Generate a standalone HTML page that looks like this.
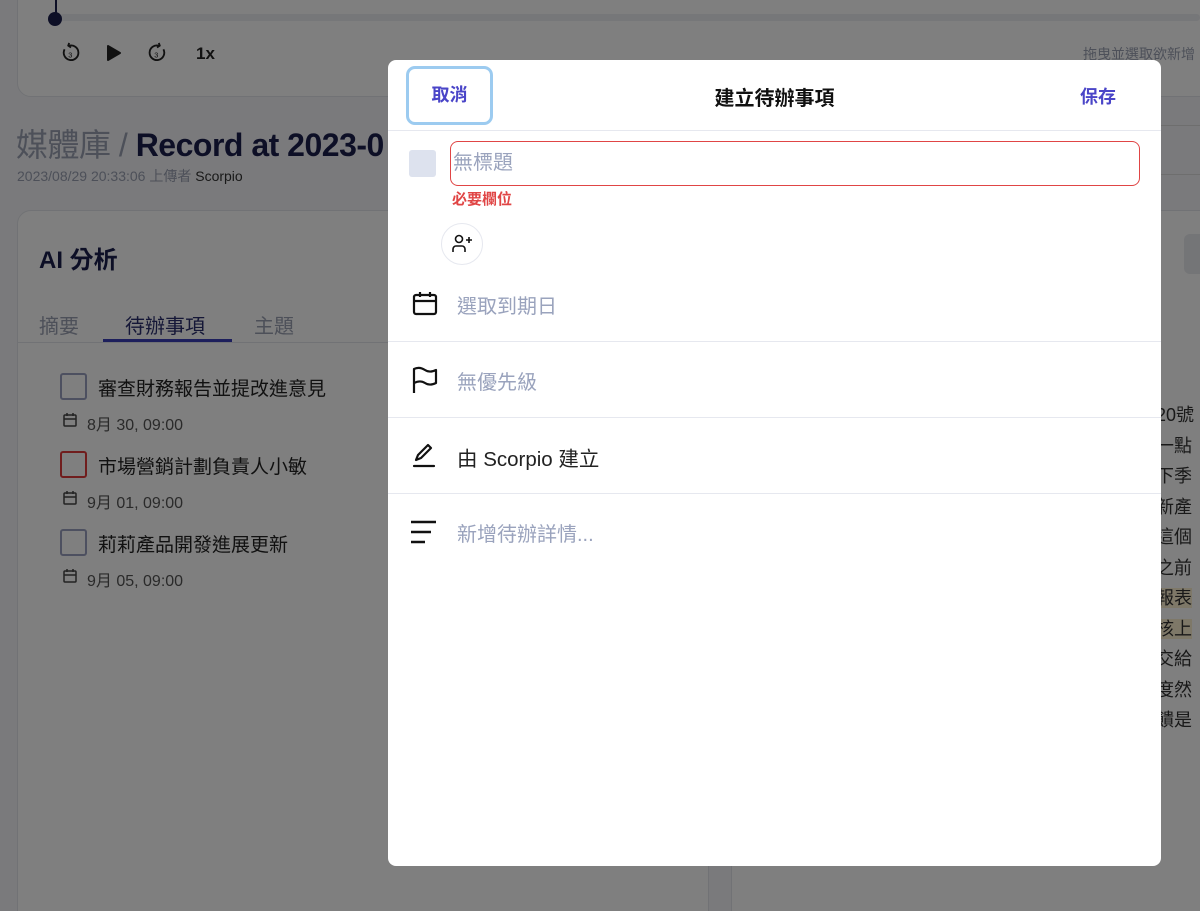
<!DOCTYPE html>
<html style="width:1200px;height:911px;overflow:hidden"><head><meta charset="utf-8"><style>
*{box-sizing:border-box;margin:0;padding:0}
body{width:1200px;height:911px;overflow:hidden;position:relative;background:#f4f5f8;font-family:"Liberation Sans","Noto Sans CJK TC",sans-serif;}
.abs{position:absolute}
.card{position:absolute;background:#fff;border:1px solid #e3e5ea;border-radius:14px}
.ov{position:absolute;left:0;top:0;width:1200px;height:911px;background:rgba(0,0,0,0.5)}
.m{position:absolute;left:388px;top:60px;width:773px;height:806px;background:#fff;border-radius:8px;overflow:hidden}
.row{position:absolute;left:0;right:0;border-top:1px solid #e6e8ef}
.gt{color:#9aa3bd;font-size:20px}
svg{position:absolute}
</style></head><body>
<div class="card" style="left:17px;top:-20px;width:1200px;height:117px"></div>
<div class="abs" style="left:55px;top:0;width:2px;height:18px;background:#1b1f4d"></div>
<div class="abs" style="left:60px;top:14px;width:1140px;height:7px;background:#eceef2;border-radius:4px"></div>
<div class="abs" style="left:48px;top:12px;width:14px;height:14px;border-radius:50%;background:#1b1f4d"></div>
<svg style="left:60px;top:42px" width="22" height="22" viewBox="0 0 24 24" fill="none" stroke="#222" stroke-width="2"><path d="M5 8a8 8 0 1 0 5-4"/><path d="M10 1l-1 3 3 2"/><text x="9" y="17" font-size="8" fill="#222" stroke="none">3</text></svg>
<svg style="left:106px;top:44px" width="16" height="18" viewBox="0 0 16 18"><path d="M2 2l12 7-12 7z" fill="#222" stroke="#222" stroke-linejoin="round" stroke-width="2"/></svg>
<svg style="left:146px;top:42px" width="22" height="22" viewBox="0 0 24 24" fill="none" stroke="#222" stroke-width="2"><path d="M19 8a8 8 0 1 1-5-4"/><path d="M14 1l1 3-3 2"/><text x="9" y="17" font-size="8" fill="#222" stroke="none">3</text></svg>
<div class="abs" style="left:196px;top:44px;font-size:17px;color:#222;font-weight:bold">1x</div>
<div class="abs" style="left:1083px;top:44px;font-size:14px;color:#9aa0b2;white-space:nowrap">拖曳並選取欲新增</div>
<div class="abs" style="left:16px;top:120px;font-size:32px;color:#1b1f4d;white-space:nowrap;font-weight:bold;letter-spacing:-0.5px"><span style="color:#9aa0b2;font-weight:normal">媒體庫 / </span>Record at 2023-0</div>
<div class="abs" style="left:17px;top:166px;font-size:14px;color:#9aa0b2;white-space:nowrap">2023/08/29 20:33:06 上傳者 <span style="color:#333">Scorpio</span></div>
<div class="card" style="left:17px;top:210px;width:692px;height:720px"></div>
<div class="card" style="left:731px;top:210px;width:500px;height:720px"></div>
<div class="abs" style="left:39px;top:240px;font-size:24px;font-weight:bold;color:#1b1f4d">AI 分析</div>
<div class="abs" style="left:39px;top:310px;font-size:20px;color:#9aa0b2">摘要</div>
<div class="abs" style="left:125px;top:310px;font-size:20px;color:#2a2f6e">待辦事項</div>
<div class="abs" style="left:254px;top:310px;font-size:20px;color:#9aa0b2">主題</div>
<div class="abs" style="left:103px;top:339px;width:129px;height:3px;background:#3a3fb8"></div>
<div class="abs" style="left:17px;top:342px;width:692px;height:1px;background:#e3e5ea"></div>
<div class="abs" style="left:60px;top:373px;width:27px;height:27px;border:2px solid #9aa0c0;border-radius:3px"></div>
<div class="abs" style="left:98px;top:374px;font-size:19px;color:#222">審查財務報告並提改進意見</div>
<div class="abs" style="left:87px;top:411px;font-size:16px;color:#555">8月 30, 09:00</div>
<div class="abs" style="left:60px;top:451px;width:27px;height:27px;border:2px solid #e03b3b;border-radius:3px"></div>
<div class="abs" style="left:98px;top:452px;font-size:19px;color:#222">市場營銷計劃負責人小敏</div>
<div class="abs" style="left:87px;top:489px;font-size:16px;color:#555">9月 01, 09:00</div>
<div class="abs" style="left:60px;top:529px;width:27px;height:27px;border:2px solid #9aa0c0;border-radius:3px"></div>
<div class="abs" style="left:98px;top:530px;font-size:19px;color:#222">莉莉產品開發進展更新</div>
<div class="abs" style="left:87px;top:567px;font-size:16px;color:#555">9月 05, 09:00</div>
<svg style="left:62px;top:412px" width="16" height="16" viewBox="0 0 16 16" fill="none" stroke="#444" stroke-width="1.5"><rect x="2" y="3" width="12" height="11" rx="1"/><path d="M2 7h12M5 1v3M11 1v3"/></svg>
<svg style="left:62px;top:490px" width="16" height="16" viewBox="0 0 16 16" fill="none" stroke="#444" stroke-width="1.5"><rect x="2" y="3" width="12" height="11" rx="1"/><path d="M2 7h12M5 1v3M11 1v3"/></svg>
<svg style="left:62px;top:568px" width="16" height="16" viewBox="0 0 16 16" fill="none" stroke="#444" stroke-width="1.5"><rect x="2" y="3" width="12" height="11" rx="1"/><path d="M2 7h12M5 1v3M11 1v3"/></svg>
<div class="abs" style="left:1160px;top:125px;width:40px;height:50px;border-top:1px solid #ddd;border-bottom:1px solid #ddd"></div>
<div class="abs" style="left:1184px;top:234px;width:30px;height:40px;background:#e8eaee;border-radius:6px"></div>
<div class="abs" style="left:1156px;top:400px;font-size:18px;color:#333;line-height:30.5px;white-space:nowrap">20號<br>一點<br>下季<br>新產<br>這個<br>之前<br><span style="background:#fdf1d0">報表</span><br><span style="background:#fdf1d0">核上</span><br>交給<br>度然<br>饋是</div>
<div class="ov"></div>
<div class="m">
 <div class="abs" style="left:18px;top:6px;width:87px;height:59px;border:3px solid #9ccbf0;border-radius:9px;text-align:center;line-height:53px;color:#4a45c8;font-size:18px;font-weight:bold">取消</div>
 <div class="abs" style="left:0;right:0;top:22px;text-align:center;font-size:20px;font-weight:bold;color:#111">建立待辦事項</div>
 <div class="abs" style="left:692px;top:23px;font-size:18px;font-weight:bold;color:#4a45c8">保存</div>
 <div class="row" style="top:70px"></div>
 <div class="abs" style="left:21px;top:90px;width:27px;height:27px;background:#dde2ee;border-radius:3px"></div>
 <div class="abs" style="left:62px;top:81px;width:690px;height:45px;border:1.5px solid #e04545;border-radius:8px;padding-left:2px;line-height:42px;font-size:20px;color:#9aa3bd">無標題</div>
 <div class="abs" style="left:64px;top:128px;font-size:15px;color:#e04545;font-weight:bold">必要欄位</div>
 <div class="abs" style="left:53px;top:163px;width:42px;height:42px;border:1.5px solid #e6e8ef;border-radius:50%"></div>
 <svg style="left:64px;top:174px" width="22" height="20" viewBox="0 0 22 20" fill="none" stroke="#111" stroke-width="1.6"><circle cx="7" cy="5" r="3.5"/><path d="M1 18v-3a3 3 0 0 1 3-3h6a3 3 0 0 1 3 3v3M17 3v6M14 6h6"/></svg>
 <svg style="left:24px;top:230px" width="26" height="26" viewBox="0 0 26 26" fill="none" stroke="#111" stroke-width="2.2"><rect x="2" y="5" width="22" height="19" rx="2"/><path d="M2 11h22M8 2v5M18 2v5"/></svg>
 <div class="abs gt" style="left:69px;top:230px">選取到期日</div>
 <div class="row" style="top:281px"></div>
 <svg style="left:24px;top:306px" width="26" height="28" viewBox="0 0 26 28" fill="none" stroke="#111" stroke-width="2.2" stroke-linejoin="round"><path d="M2 27V3c4-2 8-1 11 1s7 2 11 0v13c-4 2-8 2-11 0s-7-2-11 0"/></svg>
 <div class="abs gt" style="left:69px;top:306px">無優先級</div>
 <div class="row" style="top:357px"></div>
 <svg style="left:24px;top:382px" width="26" height="26" viewBox="0 0 26 26" fill="none" stroke="#111" stroke-width="2.2" stroke-linecap="round" stroke-linejoin="round"><path d="M4 18l2-5L16 3l3 3L9 16z"/><path d="M2 24h20"/></svg>
 <div class="abs" style="left:69px;top:382px;font-size:20.5px;color:#222">由 Scorpio 建立</div>
 <div class="row" style="top:433px"></div>
 <svg style="left:22px;top:460px" width="28" height="24" viewBox="0 0 28 24" stroke="#111" stroke-width="2.4"><path d="M1 2h25M1 12h20M1 22h14"/></svg>
 <div class="abs gt" style="left:69px;top:458px">新增待辦詳情...</div>
</div>
</body></html>
